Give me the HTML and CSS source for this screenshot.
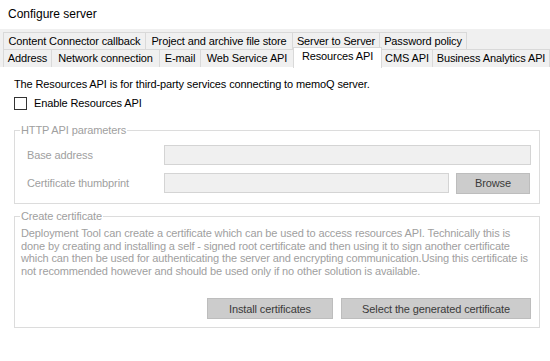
FILE: index.html
```html
<!DOCTYPE html>
<html>
<head>
  <title>Configure server</title>
  <link rel="stylesheet" href="styles.css">
</head>
<body>
  <div class="title">Configure server</div>

  <div class="tabstrip">
    <div class="tab-row">
      <div class="tab w-ccc">Content Connector callback</div>
      <div class="tab w-store">Project and archive file store</div>
      <div class="tab w-s2s">Server to Server</div>
      <div class="tab w-pwd">Password policy</div>
    </div>
    <div class="tab-row">
      <div class="tab w-addr">Address</div>
      <div class="tab w-net">Network connection</div>
      <div class="tab w-mail">E-mail</div>
      <div class="tab w-ws">Web Service API</div>
      <div class="tab w-res selected">Resources API</div>
      <div class="tab w-cms">CMS API</div>
      <div class="tab w-ba">Business Analytics API</div>
    </div>
  </div>

  <div class="page">
    <p class="intro">The Resources API is for third-party services connecting to memoQ server.</p>
    <label class="check-row">
      <span class="checkbox"></span>
      Enable Resources API
    </label>

    <fieldset class="group http-group">
      <legend>HTTP API parameters</legend>
      <div class="field-row">
        <span class="field-label">Base address</span>
        <span class="input wide"></span>
      </div>
      <div class="field-row">
        <span class="field-label">Certificate thumbprint</span>
        <span class="input narrow"></span>
        <button class="btn browse">Browse</button>
      </div>
    </fieldset>

    <fieldset class="group cert-group">
      <legend>Create certificate</legend>
      <p class="cert-text">Deployment Tool can create a certificate which can be used to access resources API. Technically this is<br>done by creating and installing a self - signed root certificate and then using it to sign another certificate<br>which can then be used for authenticating the server and encrypting communication.Using this certificate is<br>not recommended however and should be used only if no other solution is available.</p>
      <div class="btn-row">
        <button class="btn install">Install certificates</button>
        <button class="btn select">Select the generated certificate</button>
      </div>
    </fieldset>
  </div>
</body>
</html>
```

FILE: styles.css
```css
body {
  font-family: 'Liberation Sans', Arial, sans-serif;
  font-size: 11px;
  letter-spacing: -0.12px;
  color: #000;
  background-color: white;
  margin: 0;
  padding: 0;
}
.title {
  height: 29px;
  line-height: 28px;
  padding-left: 8px;
  font-size: 12px;
  letter-spacing: 0;
}
.tabstrip {
  background-color: #f0f0f0;
  height: 38px;
  padding-top: 3px;
  padding-left: 3px;
  box-sizing: border-box;
}
.tab-row {
  display: flex;
  height: 17px;
}
.tab {
  box-sizing: border-box;
  height: 18px;
  line-height: 16px;
  border: 1px solid #d9d9d9;
  margin-right: -1px;
  text-align: center;
  white-space: nowrap;
}
.tab-row + .tab-row .tab {
  border-bottom: none;
}
.tab.selected {
  position: relative;
  background-color: white;
  height: 21px;
  margin-top: -2px;
  line-height: 17px;
  z-index: 1;
}
.w-ccc { width: 143px; }
.w-store { width: 148px; }
.w-s2s { width: 88px; }
.w-pwd { width: 88px; }
.w-addr { width: 49px; }
.w-net { width: 109px; }
.w-mail { width: 42px; }
.w-ws { width: 94px; }
.w-res { width: 89px; }
.w-cms { width: 52px; }
.w-ba { width: 118px; }

.page {
  padding: 10px 10px 0 14px;
}
.intro {
  margin: 0;
  line-height: 14px;
}
.check-row {
  display: flex;
  align-items: center;
  gap: 7px;
  margin-top: 6px;
  height: 13px;
  line-height: 13px;
}
.checkbox {
  width: 13px;
  height: 13px;
  box-sizing: border-box;
  border: 1px solid #333;
  background-color: white;
}
.group {
  border: 1px solid #dcdcdc;
  margin: 0;
  padding: 0 8px 0 12px;
  color: #a0a0a0;
}
.group legend {
  padding: 0 1px;
  margin-left: -7px;
  line-height: 13px;
}
.http-group {
  margin-top: 14px;
  padding-top: 8px;
  padding-bottom: 10px;
}
.field-row {
  display: flex;
  align-items: center;
  height: 20px;
}
.field-row + .field-row {
  margin-top: 8px;
}
.field-label {
  width: 137px;
}
.input {
  height: 20px;
  box-sizing: border-box;
  border: 1px solid #d4d4d4;
  background-color: #f0f0f0;
}
.wide {
  flex: 1;
}
.narrow {
  width: 285px;
}
.btn {
  font-family: 'Liberation Sans', Arial, sans-serif;
  font-size: 11px;
  letter-spacing: -0.12px;
  color: #3a3a3a;
  background-color: #cccccc;
  border: 1px solid #bdbdbd;
  height: 21px;
  padding: 0;
}
.browse {
  width: 74px;
  margin-left: 7px;
  margin-right: 0;
}
.cert-group {
  margin-top: 6px;
  padding: 4px 8px 8px 6px;
}
.cert-group legend {
  margin-left: -1px;
}
.cert-text {
  margin: 0;
  line-height: 12.5px;
  white-space: nowrap;
}
.btn-row {
  display: flex;
  justify-content: flex-end;
  gap: 8px;
  margin-top: 21px;
}
.install {
  width: 126px;
}
.select {
  width: 190px;
}
```
